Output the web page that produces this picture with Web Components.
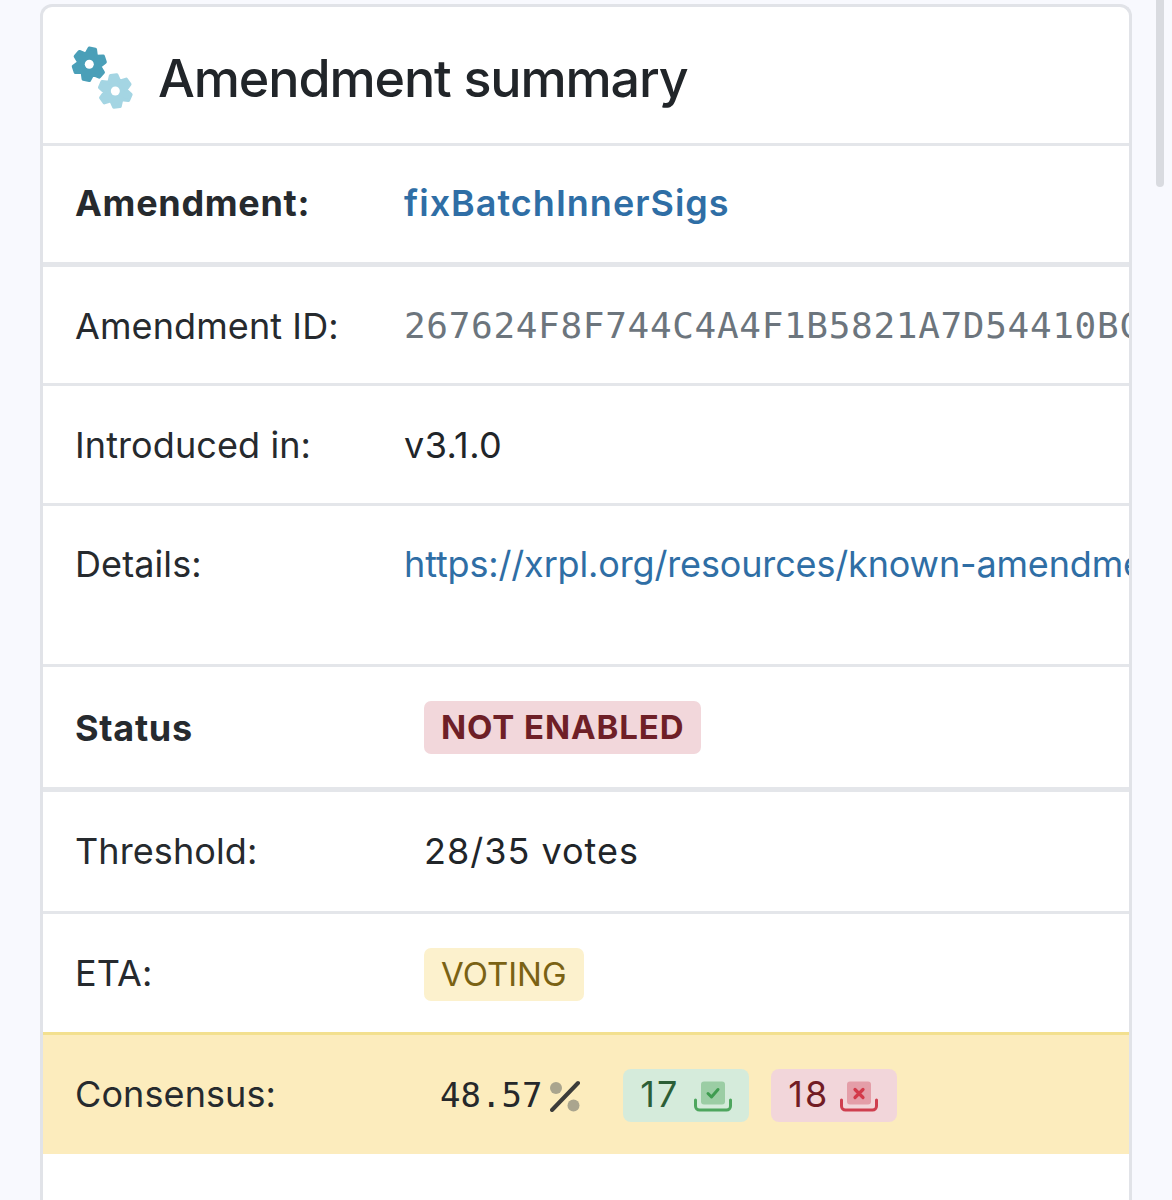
<!doctype html>
<html>
<head>
<meta charset="utf-8">
<style>
  html, body { margin: 0; height: 1200px; overflow: hidden; background: #f8f9fe; }
  body { font-family: Inter, "Liberation Sans", sans-serif; color: #212529; }
</style>
</head>
<body>
<scroll-thumb></scroll-thumb>
<amend-card>
  <card-head slot="head">Amendment summary</card-head>

  <amend-row strong thick style="--label-w: 329px" pad="33 35">
    <span slot="label">Amendment:</span>
    <a-link strong>fixBatchInnerSigs</a-link>
  </amend-row>
  <amend-row style="--label-w: 329px" pad="35 33">
    <span slot="label">Amendment ID:</span>
    <mono-text muted>267624F8F744C4A4F1B5821A7D54410BC1C32AFE2AF2E5A4C0D1B2E3F4A5</mono-text>
  </amend-row>
  <amend-row style="--label-w: 329px" pad="35 34">
    <span slot="label">Introduced in:</span>
    <span style="letter-spacing: .4px">v3.1.0</span>
  </amend-row>
  <amend-row tall style="--label-w: 329px" pad="34 34">
    <span slot="label">Details:</span>
    <a-link>https://xrpl.org/resources/known-amendments#fixbatchinnersigs</a-link>
  </amend-row>

  <amend-row strong thick style="--label-w: 349px" pad="34 33">
    <span slot="label">Status</span>
    <tag-pill tone="red" strong>NOT ENABLED</tag-pill>
  </amend-row>
  <amend-row style="--label-w: 349px" pad="35 36">
    <span slot="label">Threshold:</span>
    <span style="letter-spacing: 1px">28/35 votes</span>
  </amend-row>
  <amend-row lift style="--label-w: 349px" pad="34 31">
    <span slot="label">ETA:</span>
    <tag-pill tone="yellow">VOTING</tag-pill>
  </amend-row>
  <amend-row lift highlight style="--label-w: 349px" pad="34 32">
    <span slot="label">Consensus:</span>
    <consensus-votes yes="17" no="18" pct="48.57"></consensus-votes>
  </amend-row>
  <amend-row empty style="--label-w: 349px" pad="34 34"></amend-row>
</amend-card>

<script>
// gear outline with rounded teeth, one polygon + a stroke of the same colour
function gearPoints(cx, cy, outer, inner, rot) {
  const pts = []
  for (let i = 0; i < 6; i++) {
    const a = rot + i * 60
    for (const [off, r] of [[-11, outer], [11, outer], [30, inner]]) {
      const t = (a + off) * Math.PI / 180
      pts.push((cx + r * Math.cos(t)).toFixed(1) + ',' + (cy + r * Math.sin(t)).toFixed(1))
    }
  }
  return pts.join(' ')
}

customElements.define('scroll-thumb', class extends HTMLElement {
  constructor() {
    super()
    this.attachShadow({ mode: 'open' }).innerHTML = `
      <style>
        :host {
          position: absolute;
          top: 0;
          left: 1156px;
          width: 8px;
          height: 187px;
          background: #d9dbe0;
          border-radius: 0 0 4px 4px;
        }
      </style>`
  }
})

customElements.define('amend-card', class extends HTMLElement {
  constructor() {
    super()
    this.attachShadow({ mode: 'open' }).innerHTML = `
      <style>
        :host {
          display: block;
          box-sizing: border-box;
          width: 1092px;
          margin: 4px 0 0 40px;
          height: 1196px;
          background: #fff;
          border: 3px solid #e1e3e8;
          border-bottom: 0;
          border-radius: 12px 12px 0 0;
          overflow: hidden;
        }
      </style>
      <slot name="head"></slot>
      <slot></slot>`
  }
})

customElements.define('card-head', class extends HTMLElement {
  constructor() {
    super()
    this.attachShadow({ mode: 'open' }).innerHTML = `
      <style>
        :host {
          display: flex;
          align-items: center;
          gap: 21px;
          box-sizing: border-box;
          height: 139px;
          padding: 0 0 0 26px;
          border-bottom: 3px solid #e4e6ea;
          font-size: 52px;
          font-weight: 500;
          letter-spacing: -1.12px;
          white-space: nowrap;
        }
        svg { display: block; flex: none; }
        .txt { padding-top: 6px; }
      </style>
      <svg width="68" height="68" viewBox="0 0 68 68">
        <g stroke-linejoin="round">
          <polygon points="${gearPoints(20.3, 23.3, 16, 10.5, -19)}" fill="#4a9fb8" stroke="#4a9fb8" stroke-width="3.5"/>
          <circle cx="20.3" cy="23.3" r="4.5" fill="#fff"/>
          <polygon points="${gearPoints(46.3, 50, 16, 10.5, 24)}" fill="#a4d5e3" stroke="#a4d5e3" stroke-width="3.5"/>
          <circle cx="46.3" cy="50" r="4.5" fill="#fff"/>
        </g>
      </svg>
      <div class="txt"><slot></slot></div>`
  }
})

customElements.define('amend-row', class extends HTMLElement {
  connectedCallback() {
    const [top, bottom] = (this.getAttribute('pad') || '34 34').split(' ')
    this.shadowRoot.querySelector('.row').style.padding = `${top}px 0 ${bottom}px 32px`
  }
  constructor() {
    super()
    this.attachShadow({ mode: 'open' }).innerHTML = `
      <style>
        :host {
          display: block;
          font-size: 36px;
          line-height: 48px;
          white-space: nowrap;
          border-bottom: 3px solid #e4e6ea;
        }
        :host([thick]) { border-bottom-width: 5px; }
        :host([strong]) .label { font-weight: 700; letter-spacing: .7px; }
        :host([tall]) .row { min-height: 90px; align-items: flex-start; }
        :host([lift]) .label { align-self: flex-start; margin-top: 1px; }
        :host([highlight]) {
          background: #fcecbd;
          border-top: 3px solid #f3e08f;
          border-bottom: 0;
          margin-top: -3px;
        }
        :host([empty]) { border: 0; }
        .row { display: flex; align-items: center; }
        .label { flex: none; width: var(--label-w); color: #262a2e; letter-spacing: .1px; }
        .value { flex: none; display: flex; align-items: center; }
      </style>
      <div class="row">
        <div class="label"><slot name="label"></slot></div>
        <div class="value"><slot></slot></div>
      </div>`
  }
})

customElements.define('a-link', class extends HTMLElement {
  constructor() {
    super()
    this.attachShadow({ mode: 'open' }).innerHTML = `
      <style>
        :host { color: #2f6ea5; letter-spacing: -.15px; }
        :host([strong]) { font-weight: 600; letter-spacing: 1px; }
      </style>
      <slot></slot>`
  }
})

customElements.define('mono-text', class extends HTMLElement {
  constructor() {
    super()
    this.attachShadow({ mode: 'open' }).innerHTML = `
      <style>
        :host {
          font-family: "DejaVu Sans Mono", "Liberation Mono", monospace;
          font-size: 36px;
          letter-spacing: .68px;
        }
        :host([muted]) { color: #6c757d; }
      </style>
      <slot></slot>`
  }
})

customElements.define('tag-pill', class extends HTMLElement {
  constructor() {
    super()
    this.attachShadow({ mode: 'open' }).innerHTML = `
      <style>
        :host {
          display: inline-flex;
          align-items: center;
          box-sizing: border-box;
          height: 53px;
          padding: 0 17px 2px;
          border-radius: 7px;
          font-size: 33px;
        }
        :host([strong]) { font-weight: 700; letter-spacing: .9px; }
        :host([tone="red"]) { background: #f2d7db; color: #6e1f27; }
        :host([tone="yellow"]) { background: #fcf1cd; color: #7a6214; }
      </style>
      <slot></slot>`
  }
})

customElements.define('tray-icon', class extends HTMLElement {
  constructor() {
    super()
    const yes = this.getAttribute('kind') === 'yes'
    const box = yes ? '#9bcda4' : '#e49ea8'
    const line = yes ? '#4ea65e' : '#cf3f4f'
    const mark = yes
      ? '<path d="M14 13.5l3.5 3.5 6.5-7.5" fill="none" stroke="#3f9c50" stroke-width="3" stroke-linecap="round" stroke-linejoin="round"/>'
      : '<path d="M15 9.5l8 8M23 9.5l-8 8" fill="none" stroke="#d33a4a" stroke-width="3.2" stroke-linecap="round"/>'
    this.attachShadow({ mode: 'open' }).innerHTML = `
      <style>
        :host { display: block; width: 38px; height: 32px; }
        svg { display: block; }
      </style>
      <svg width="38" height="32" viewBox="0 0 38 32">
        <rect x="7" y="1.5" width="24" height="23" rx="3" fill="${box}"/>
        ${mark}
        <path d="M1.5 20v6a4 4 0 0 0 4 4h27a4 4 0 0 0 4-4v-6" fill="none" stroke="${line}" stroke-width="3" stroke-linecap="round"/>
      </svg>`
  }
})

customElements.define('consensus-votes', class extends HTMLElement {
  connectedCallback() {
    const sr = this.shadowRoot
    sr.querySelector('.num').textContent = this.getAttribute('pct')
    sr.querySelector('.yes').textContent = this.getAttribute('yes')
    sr.querySelector('.no').textContent = this.getAttribute('no')
  }
  constructor() {
    super()
    this.attachShadow({ mode: 'open' }).innerHTML = `
      <style>
        :host { display: flex; align-items: center; }
        .pct { display: flex; align-items: center; gap: 8px; margin: 0 41px 0 16px; }
        .num { font-family: "DejaVu Sans Mono", "Liberation Mono", monospace; font-size: 34px; color: #26282a; padding-bottom: 2px; }
        .pct svg { display: block; }
        .badge {
          display: flex;
          align-items: center;
          justify-content: space-between;
          box-sizing: border-box;
          width: 126px;
          height: 53px;
          border-radius: 8px;
          font-size: 36px;
          letter-spacing: 2px;
        }
        .badge span { padding-bottom: 3px; }
        .badge.g { background: #d5ebdb; color: #2c5e36; margin-right: 22px; padding: 0 17px; }
        .badge.r { background: #f2d6da; color: #721c24; padding: 0 19px 0 17px; }
      </style>
      <div class="pct">
        <span class="num"></span>
        <svg width="32" height="32" viewBox="0 0 32 32">
          <circle cx="6" cy="8" r="6" fill="#aaa58e"/>
          <circle cx="23.5" cy="25.5" r="6" fill="#aaa58e"/>
          <path d="M2 30L28 3" stroke="#3c3c3a" stroke-width="4" stroke-linecap="round"/>
        </svg>
      </div>
      <div class="badge g"><span class="yes"></span><tray-icon kind="yes"></tray-icon></div>
      <div class="badge r"><span class="no"></span><tray-icon kind="no"></tray-icon></div>`
  }
})
</script>
</body>
</html>
